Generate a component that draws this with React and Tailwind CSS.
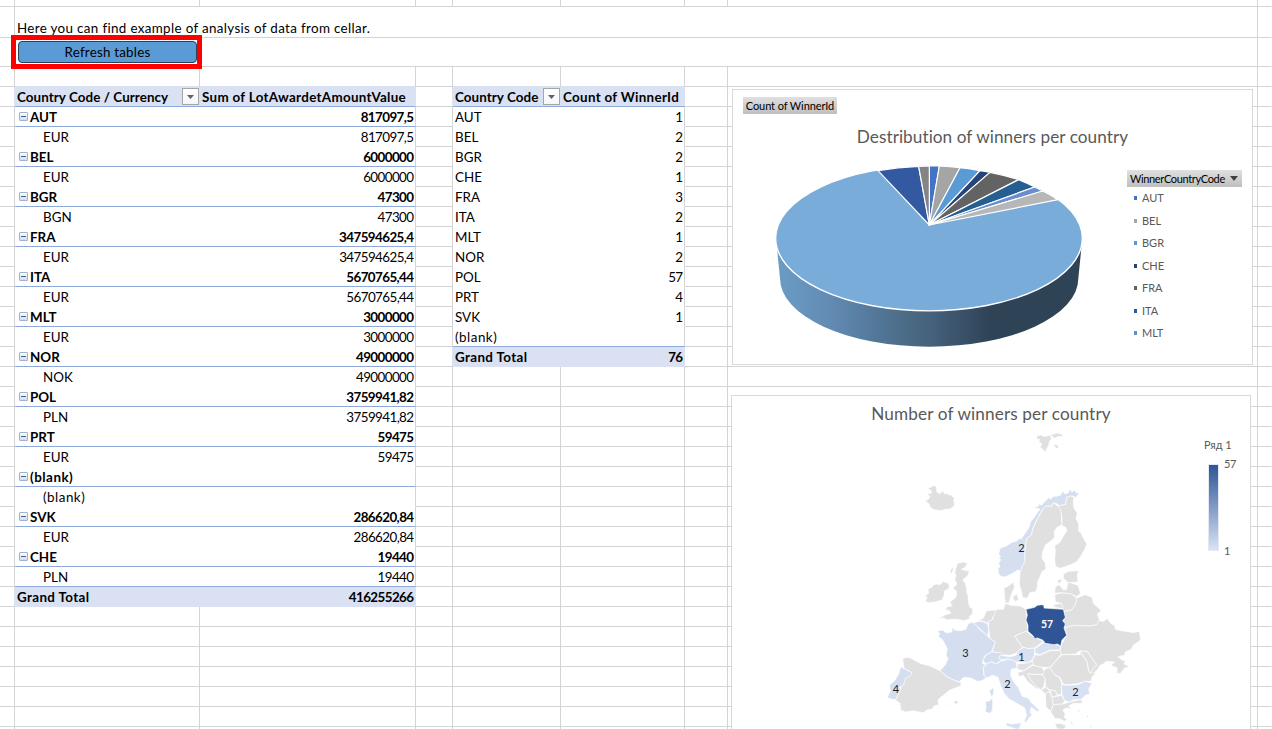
const WIDTHS = ["w-[15px]", "w-[185px]", "w-[216px]", "w-[37px]", "w-[108px]", "w-[124px]", "w-[43px]", "w-[530px]", "w-[14px]"];

const left = [
  ["h", "Country Code / Currency", "Sum of LotAwardetAmountValue"],
  ["g", "AUT", "817097,5"], ["c", "EUR", "817097,5"],
  ["g", "BEL", "6000000"], ["c", "EUR", "6000000"],
  ["g", "BGR", "47300"], ["c", "BGN", "47300"],
  ["g", "FRA", "347594625,4"], ["c", "EUR", "347594625,4"],
  ["g", "ITA", "5670765,44"], ["c", "EUR", "5670765,44"],
  ["g", "MLT", "3000000"], ["c", "EUR", "3000000"],
  ["g", "NOR", "49000000"], ["c", "NOK", "49000000"],
  ["g", "POL", "3759941,82"], ["c", "PLN", "3759941,82"],
  ["g", "PRT", "59475"], ["c", "EUR", "59475"],
  ["g", "(blank)", ""], ["c", "(blank)", ""],
  ["g", "SVK", "286620,84"], ["c", "EUR", "286620,84"],
  ["g", "CHE", "19440"], ["c", "PLN", "19440"],
  ["t", "Grand Total", "416255266"],
];
const right = [
  ["h", "Country Code", "Count of WinnerId"],
  ["c", "AUT", "1"], ["c", "BEL", "2"], ["c", "BGR", "2"], ["c", "CHE", "1"],
  ["c", "FRA", "3"], ["c", "ITA", "2"], ["c", "MLT", "1"], ["c", "NOR", "2"],
  ["c", "POL", "57"], ["c", "PRT", "4"], ["c", "SVK", "1"], ["c", "(blank)", ""],
  ["t", "Grand Total", "76"],
];

const bottoms = { d: "border-b-[#d4d4d4]", w: "border-b-white", b: "border-b-[#8ea9db]", f: "border-b-[#d9e1f2]" };
const sides = { d: "border-r border-r-[#d4d4d4]", w: "border-r border-r-white", f: "border-r border-r-[#d9e1f2]", none: "border-r-0" };

function bottomOf(list, i) {
  const row = list[i];
  if (!row) return "d";
  if (row[0] === "h" || row[0] === "g") return "b";
  if (row[0] === "t") return "f";
  return list[i + 1][0] === "t" ? "b" : "w";
}
const filled = (row) => row && (row[0] === "h" || row[0] === "t");

function Cell({ w, b = "d", r = "d", bg = "", children }) {
  return (
    <div className={`${w} ${bottoms[b]} ${sides[r]} ${bg} flex shrink-0 items-center overflow-hidden border-b whitespace-nowrap`}>
      {children}
    </div>
  );
}

function Filter() {
  return (
    <span className="mr-px flex h-[17px] w-[17px] shrink-0 items-center justify-center border border-[#a6a6a6] bg-gradient-to-b from-white to-[#f4f6fa]">
      <svg width="7" height="4" viewBox="0 0 7 4"><path d="M0 0H7L3.5 4Z" fill="#5f6368" /></svg>
    </span>
  );
}

function Collapse() {
  return (
    <span className="mr-[2px] mb-px ml-1 flex h-[9px] w-[9px] items-center justify-center rounded-[1px] border border-[#9fb3cf] bg-gradient-to-b from-white to-[#d3deec]">
      <span className="h-px w-[5px] bg-[#3f5f8f]" />
    </span>
  );
}

function PivotCells({ list, i, w1, w2, plainPad }) {
  const row = list[i];
  const b = bottomOf(list, i);
  if (!row) return <><Cell w={w1} b={b} /><Cell w={w2} b={b} /></>;
  const [kind, label, value] = row;
  const bg = filled(row) ? "bg-[#d9e1f2]" : "";
  const bold = kind === "c" ? "" : "font-bold";
  const track = kind === "t" ? "tracking-[0.36px]" : label === "(blank)" ? "tracking-[0.5px]" : kind === "h" ? "tracking-[0.07px]" : "";
  return (
    <>
      <Cell w={w1} b={b} r="none" bg={bg}>
        {kind === "g" && <Collapse />}
        <span className={`${bold} ${track} flex-1 ${kind === "g" ? "" : kind === "c" ? plainPad : "pl-[2px]"}`}>{label}</span>
        {kind === "h" && <Filter />}
      </Cell>
      <Cell w={w2} b={b} r={filled(row) ? "f" : "d"} bg={bg}>
        <span className={`${bold} flex-1 ${kind === "h" ? "pl-[2px] tracking-[0.31px]" : "pr-[1.5px] text-right tracking-[-0.58px]"}`}>{value}</span>
      </Cell>
    </>
  );
}

function SheetRow({ i }) {
  return (
    <div className="flex h-5 shrink-0">
      <Cell w={WIDTHS[0]} r={filled(left[i]) ? "f" : "d"} />
      <PivotCells list={left} i={i} w1={WIDTHS[1]} w2={WIDTHS[2]} plainPad="pl-7" />
      <Cell w={WIDTHS[3]} r={filled(right[i]) ? "f" : "d"} />
      <PivotCells list={right} i={i} w1={WIDTHS[4]} w2={WIDTHS[5]} plainPad="pl-[2px]" />
      <Cell w={WIDTHS[6]} /><Cell w={WIDTHS[7]} /><Cell w={WIDTHS[8]} r="w" />
    </div>
  );
}

const legend = [
  ["AUT", "bg-[#4472c4]"], ["BEL", "bg-[#a5a5a5]"], ["BGR", "bg-[#5b9bd5]"], ["CHE", "bg-[#264478]"],
  ["FRA", "bg-[#636363]"], ["ITA", "bg-[#255e91]"], ["MLT", "bg-[#698ed0]"],
];

const edge = [[598, 243], [628, 243], [690, 248], [750, 257], [780, 262], [866, 284], [914, 306], [938, 318], [984, 344]];
const sliceColors = ["#4472c4", "#a5a5a5", "#5b9bd5", "#264478", "#636363", "#255e91", "#698ed0", "#b7b7b7"];

function Pie() {
  const slice = (a, b, color) => (
    <path key={color} d={`M598 420L${a[0]} ${a[1]}A460 217.5 0 0 1 ${b[0]} ${b[1]}Z`} fill={color} stroke="#fff" strokeWidth="3.5" strokeLinejoin="round" />
  );
  return (
    <svg className="absolute top-[70px] left-[37px]" width="320" height="190" viewBox="120 225 960 570">
      <defs>
        <linearGradient id="side" x1="0" x2="1">
          <stop offset="0" stopColor="#6b9cc4" /><stop offset=".1" stopColor="#6693bb" /><stop offset=".18" stopColor="#628ab2" />
          <stop offset=".32" stopColor="#53789a" /><stop offset=".45" stopColor="#496881" /><stop offset=".5" stopColor="#46627d" />
          <stop offset=".7" stopColor="#2f4357" /><stop offset="1" stopColor="#2f4357" />
        </linearGradient>
      </defs>
      <path d="M140 480L150 580A447.5 205 0 0 0 1045 580L1055 480Z" fill="url(#side)" />
      <ellipse cx="597" cy="460" rx="460" ry="217.5" fill="#7aacda" stroke="#fff" strokeWidth="4" />
      {sliceColors.map((c, i) => slice(edge[i], edge[i + 1], c))}
      {slice([444, 257], [566, 244], "#335aa1")}
      {slice([566, 244], [598, 243], "#848484")}
    </svg>
  );
}

function PieChart() {
  return (
    <section className="absolute top-[89px] left-[732px] h-[276px] w-[521px] border border-[#d9d9d9] bg-white text-[#595959]">
      <div className="mt-[7px] ml-[10px] flex h-[17px] w-[94px] items-center justify-center bg-gradient-to-b from-[#e0e0e0] to-[#bfbfbf] text-[11px] tracking-[-0.09px] whitespace-nowrap text-black">Count of WinnerId</div>
      <h2 className="mt-[11px] text-center text-[17.2px] leading-[24px] tracking-[0.05px]">Destribution of winners per country</h2>
      <Pie />
      <div className="absolute top-[80px] left-[394px] w-[115px]">
        <div className="flex h-[17px] items-center justify-between bg-gradient-to-b from-[#e0e0e0] to-[#bfbfbf] pr-1 pl-[3px] text-[11px] tracking-[-0.35px] text-black">
          WinnerCountryCode
          <svg width="8" height="5" viewBox="0 0 8 5"><path d="M0 0H8L4 5Z" fill="#404040" /></svg>
        </div>
        <ul className="flex flex-col text-[11px]">
          {legend.map(([name, color]) => (
            <li key={name} className="flex h-[22.5px] items-center gap-[5px] pl-[7px]">
              <span className={`h-[4px] w-[3px] ${color}`} />{name}
            </li>
          ))}
        </ul>
      </div>
    </section>
  );
}

const NORTH = [
  "M530 32L545 30L552 35L560 33L572 30L574 42L568 50L566 62L560 70L556 84L550 74L540 66L546 58L536 50L540 44L530 42Z",
  "M570 30L590 24L608 28L606 36L596 34L585 40Z", "M580 60L590 58L596 66L590 72Z",
  "M203 190L218 184L222 181L230 186L230 200L240 206L248 198L256 208L262 204L266 210L276 210L278 216L284 218L281 226L284 240L272 252L254 253L246 257L222 254L210 246L208 238L196 228L206 222L210 214L198 205L212 206L216 200Z",
  "M580 233L590 240L602 250L604 270L606 300L592 306L582 320L584 338L570 350L556 360L548 380L546 400L556 415L558 432L546 440L540 455L533 470L532 485L528 500L510 503L502 520L488 518L484 498L478 478L480 445L486 424L495 410L494 385L496 360L500 340L514 330L518 312L532 282L548 252L560 242L574 244Z",
  "M620 217L632 212L642 218L640 232L642 250L652 264L648 280L656 296L656 318L664 325L668 335L680 356L676 370L662 394L650 410L632 419L600 430L586 424L584 400L586 380L584 362L600 352L612 330L620 318L618 308L606 302L606 275L600 250L590 240L598 242L616 238Z",
];
const NORWAY = "M655 208L648 218L640 214L630 213L620 217L616 238L598 242L590 236L580 233L574 244L560 242L548 252L540 266L532 282L524 296L518 312L514 330L500 340L496 360L494 385L495 410L486 424L482 440L474 434L466 440L452 448L436 456L422 454L416 446L414 430L420 425L416 415L422 404L416 400L422 396L416 388L420 370L440 362L456 352L470 348L478 340L484 342L490 332L500 318L508 305L512 290L524 275L532 262L540 252L520 249L535 244L532 238L545 240L556 228L566 218L572 222L580 214L590 214L602 210L608 198L614 206L624 204L630 192L636 202L642 194L648 203L655 203Z";
const WEST = [
  "M288 24L292 10L310 6L322 10L316 22L304 28L328 34L324 46L308 60L316 70L320 84L320 96L324 106L326 130L330 142L338 146L338 160L328 170L330 176L312 182L290 178L272 178L262 180L250 174L236 176L256 164L272 160L270 154L256 148L262 140L276 138L270 126L288 112L290 94L278 84L290 74L288 66L284 60L288 46L284 38Z",
  "M196 122L202 112L194 108L206 100L204 86L216 82L218 76L230 72L240 74L250 64L258 68L264 68L268 78L266 86L254 92L252 108L246 120L224 126L204 128Z",
  "M274 26L278 20L280 30L272 44L270 36Z", "M356 182L370 174L380 152L408 150L410 158L400 170L396 180L386 184L384 192L372 184Z",
  "M410 148L430 148L436 130L452 136L480 138L498 148L500 180L504 214L464 228L488 262L468 280L450 286L420 284L396 276L406 246L390 236L386 204L386 184L396 180L400 170Z",
  "M434 116L432 84L442 80L460 66L464 82L458 94L452 110L446 130L436 128Z", "M458 112L470 102L476 118L466 126Z",
  "M128 298L138 292L152 294L180 310L210 318L240 332L262 350L286 362L304 368L302 378L270 390L242 412L234 420L236 434L222 438L216 448L200 450L190 458L160 452L136 456L122 450L120 430L106 420L118 396L124 376L136 356L156 338L132 326Z",
  "M280 426L288 421L296 426L288 433Z", "M256 434L261 432L260 438Z", "M304 426L309 427L308 430Z",
];
const WEST_DATA = [
  "M232 212L248 210L258 218L276 216L276 202L284 210L302 212L318 208L324 192L336 186L346 192L356 206L366 214L378 222L388 234L406 246L398 266L394 276L376 286L368 302L368 312L378 312L370 324L372 346L380 352L366 362L352 364L332 354L312 352L302 360L302 366L286 362L262 350L240 332L256 314L264 296L258 284L262 266L248 240L234 228L240 222Z",
  "M340 188L358 184L372 186L382 192L386 204L384 228L370 216L356 204Z",
  "M368 302L378 286L394 276L422 278L430 286L440 290L436 300L420 302L410 312L394 306L380 312Z",
  "M122 320L132 326L156 338L150 348L136 356L130 376L118 382L122 390L106 420L90 416L82 412L92 392L88 376L104 362L116 342Z",
  "M376 424L386 424L398 414L398 450L390 460L376 456L378 440Z", "M388 392L402 382L400 404L394 410Z",
];
const EAST = [
  "M44 228L78 214L104 232L130 244L104 264L84 266L68 262Z",
  "M96 304L106 284L120 286L150 272L180 272L186 280L170 300L150 322L124 322L100 316Z",
  "M52 312L84 308L96 304L100 312L80 326L70 332L52 328Z",
  "M52 338L72 332L98 316L124 322L134 334L128 344L86 342L92 358L120 388L110 386L84 366L70 346L58 350Z",
  "M82 342L128 344L136 356L132 378L124 390L110 380L92 360Z",
  "M134 328L150 322L164 344L178 352L186 372L184 402L170 406L166 392L150 390L136 380L136 356L128 344Z",
  "M186 284L240 284L240 274L262 306L266 334L288 340L276 350L274 364L256 364L230 372L190 374L180 352L164 344L150 324L170 300Z",
  "M240 272L262 274L280 300L290 314L272 340L266 334L262 306L246 282Z",
  "M150 390L166 392L172 406L156 412Z", "M124 390L136 382L150 392L138 404Z",
  "M136 400L150 396L156 412L160 434L152 454L138 440Z", "M156 412L184 406L194 422L188 432L160 434Z",
  "M160 434L188 432L208 426L244 418L248 430L220 430L206 438L216 446L200 444L188 450L196 462L192 472L202 478L194 484L178 476L166 476L152 456Z",
  "M164 492L180 490L198 496L194 507L172 507Z", "M232 448L242 452L236 456Z", "M258 466L268 468L262 474Z", "M206 480L220 490L216 494Z", "M268 500L276 496L274 504Z",
  "M192 154L214 150L226 134L230 114L256 104L276 112L280 130L304 152L292 162L300 186L290 194L270 198L220 196L196 204L188 182L196 172Z",
  "M182 258L200 226L194 204L220 196L270 198L290 194L296 182L310 184L322 176L334 192L344 196L346 208L362 212L378 214L400 218L418 214L422 240L400 256L394 268L376 276L374 286L354 290L366 300L376 302L372 312L390 320L374 324L360 342L350 338L352 324L332 316L344 306L318 304L310 312L300 316L294 328L280 340L270 338L290 314L280 300L262 274L240 272L226 282L186 284L180 272Z",
  "M164 104L186 98L214 102L230 114L226 134L214 150L192 154L184 144L184 130L166 126Z",
  "M164 100L166 80L178 74L190 90L200 88L204 66L234 76L242 100L230 110L214 102L186 98Z",
  "M190 42L206 34L236 32L232 46L234 66L204 68L190 54Z", "M160 134L184 130L190 146L164 142Z", "M172 62L182 56L186 62L176 72Z", "M128 86L136 66L132 82Z",
];
const EAST_DATA = [
  "M-50 322L-38 310L-26 306L-10 312L4 302L12 302L24 296L48 304L52 324L34 328L32 346L40 364L56 384L66 408L88 416L90 424L108 440L118 450L114 456L94 442L90 456L96 464L84 478L78 488L72 484L80 466L74 444L60 436L44 426L28 418L12 400L2 376L-6 352L-22 346L-40 354L-48 346Z",
  "M18 488L36 492L64 488L58 507L48 507L20 498Z",
  "M0 286L30 290L48 286L56 270L72 262L84 266L104 264L104 282L98 298L84 308L52 306L24 296L8 300L-4 296Z",
  "M104 266L120 256L132 246L154 250L182 258L180 270L150 270L120 284L106 280Z",
  "M184 374L200 376L232 374L256 364L276 370L266 388L270 402L256 406L244 418L220 420L208 426L194 422L186 404Z",
];
const POLAND = "M78 148L104 142L112 136L124 134L132 136L132 144L190 148L196 172L188 182L196 192L192 204L200 226L186 240L182 258L172 252L162 254L136 250L128 240L112 234L104 236L100 228L84 214L84 196L78 180L82 166Z";

function Shapes({ list, fill }) {
  return list.map((d) => <path key={d} d={d} fill={fill} stroke="#fff" strokeWidth="2" strokeLinejoin="round" />);
}

function MapChart() {
  return (
    <section className="absolute top-[395px] left-[731px] h-[360px] w-[520px] border border-[#d9d9d9] bg-white text-[#595959]">
      <h2 className="mt-[6px] text-center text-[17.2px] leading-[24px] tracking-[0.12px]">Number of winners per country</h2>
      <svg className="absolute top-0 left-0" width="440" height="333" viewBox="732 396 440 333" fontFamily="Lato, sans-serif" fontSize="11" textAnchor="middle">
        <g transform="translate(860 425) scale(.33333)">
          <Shapes list={NORTH} fill="#e0e0e0" /><Shapes list={[NORWAY]} fill="#d6dff0" />
        </g>
        <g transform="translate(860 560) scale(.33333)">
          <Shapes list={WEST} fill="#e0e0e0" /><Shapes list={WEST_DATA} fill="#d5deef" />
        </g>
        <g transform="translate(1000 560) scale(.33333)">
          <Shapes list={EAST} fill="#e0e0e0" /><Shapes list={EAST_DATA} fill="#d8e1f2" /><Shapes list={[POLAND]} fill="#2f5597" />
        </g>
        <g fill="#262626">
          <text x="1021.5" y="552">2</text><text x="965.5" y="657">3</text><text x="896" y="693">4</text>
          <text x="1021.5" y="661">1</text><text x="1007.5" y="688">2</text><text x="1075.5" y="696">2</text>
          <text x="1047" y="628" fill="#fff" fontWeight="bold" fontSize="10.5">57</text>
        </g>
      </svg>
      <div className="absolute top-[41px] left-[472px] w-[44px] text-[11px] leading-[16px]">
        <div className="whitespace-nowrap">Ряд 1</div>
        <div className="mt-[11px] flex gap-[5px] pl-[4px]">
          <div className="h-[87px] w-[11px] border border-[#e4e8f0] bg-gradient-to-b from-[#2f5597] to-[#dae3f3]" />
          <div className="-my-2 flex flex-col justify-between tracking-[-0.3px]"><span>57</span><span>1</span></div>
        </div>
      </div>
    </section>
  );
}

export default function App() {
  return (
    <main className="relative h-[729px] w-[1272px] overflow-hidden bg-white font-[Lato,sans-serif] text-[13.4px] leading-[18px] text-black">
      <div className="flex flex-col">
        <div className="flex h-[7px] shrink-0">{WIDTHS.map((w, i) => <Cell key={w} w={w} r={i === 8 ? "w" : "d"} />)}</div>
        <div className="flex h-[31px] shrink-0">
          <Cell w="w-[15px]" />
          <div className="flex w-[1243px] items-end border-r border-b border-[#d4d4d4] pl-[2px] tracking-[0.34px]">Here you can find example of analysis of data from cellar.</div>
          <Cell w="w-[14px]" r="w" />
        </div>
        <div className="flex h-[29px] shrink-0">
          <Cell w="w-[15px]" />
          <div className="w-[1243px] border-r border-b border-[#d4d4d4]" />
          <Cell w="w-[14px]" r="w" />
        </div>
        <div className="flex h-5 shrink-0">
          {WIDTHS.map((w, i) => <Cell key={w} w={w} b={[1, 2, 4, 5].includes(i) ? "f" : "d"} r={i === 8 ? "w" : "d"} />)}
        </div>
        {Array.from({ length: 33 }, (_, i) => <SheetRow key={i} i={i} />)}
      </div>
      <div className="absolute top-[35px] left-[11px] flex h-[34px] w-[191px] border-[5px] border-[#fe0000] bg-white pt-px pl-[2px]">
        <button className="h-[22px] w-[179px] shrink-0 rounded-[4px] border border-[#2b4257] bg-[#5b9bd5] leading-[20px] tracking-[0.2px]">Refresh tables</button>
      </div>
      <PieChart />
      <MapChart />
    </main>
  );
}
